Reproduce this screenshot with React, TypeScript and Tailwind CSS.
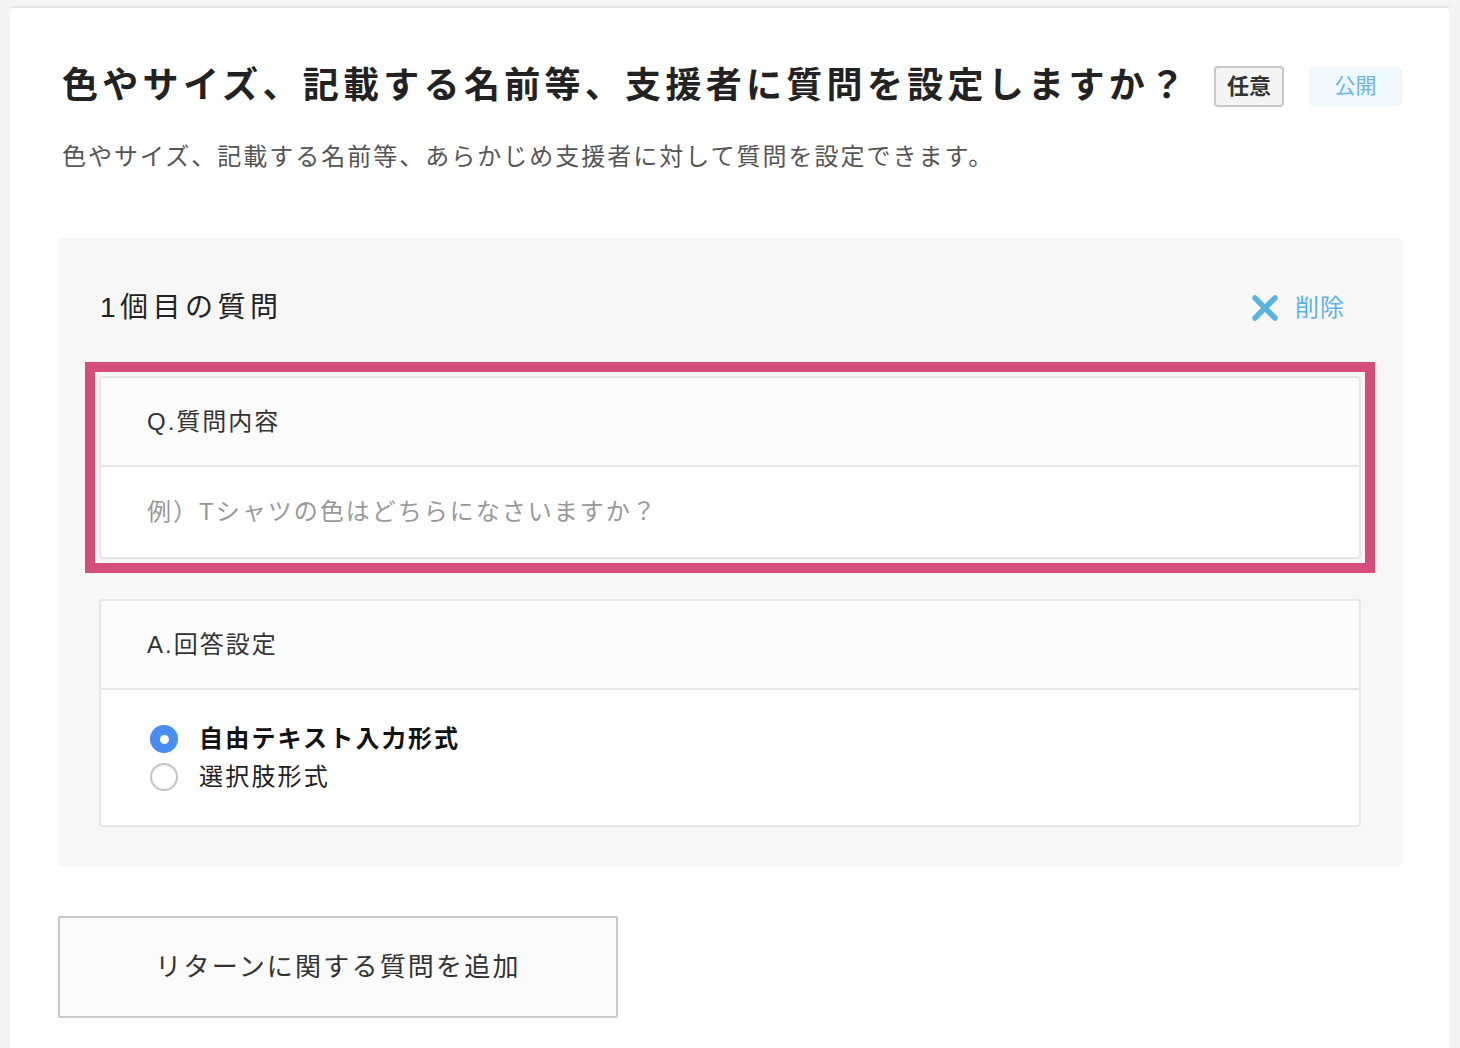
import React from 'react';

const jp = { fontFamily: '"Liberation Sans", "Noto Sans CJK JP", sans-serif' };

function Radio({ checked }: { checked: boolean }) {
  if (checked) {
    return (
      <span className="w-[28px] h-[28px] rounded-full bg-[#4a8df0] flex items-center justify-center shrink-0">
        <span className="w-[9px] h-[9px] rounded-full bg-white" />
      </span>
    );
  }
  return (
    <span className="w-[28px] h-[28px] rounded-full bg-white border-2 border-[#c4c4c4] shadow-[inset_0_1px_2px_rgba(0,0,0,0.08)] shrink-0" />
  );
}

function CloseIcon() {
  return (
    <svg width="28" height="28" viewBox="0 0 28 28" fill="none">
      <path d="M4 4 L24 24 M24 4 L4 24" stroke="#5bb3df" strokeWidth="5.5" strokeLinecap="round" />
    </svg>
  );
}

export default function App() {
  return (
    <div className="min-h-screen bg-[#f4f4f4] px-[10px] pt-[6px]" style={jp}>
      <div className="bg-white border-t-2 border-[#e2e2e2] rounded-t-[4px] px-[48px] pt-[53px] pb-[40px] min-h-[1100px]">
        {/* Header */}
        <div className="flex items-center">
          <h1 className="pl-[4px] text-[36px] leading-[50px] font-bold tracking-[4.3px] text-[#222]">
            色やサイズ、記載する名前等、支援者に質問を設定しますか？
          </h1>
          <div className="ml-auto flex items-center gap-[25px]">
            <span className="w-[70px] h-[41px] flex items-center justify-center bg-[#f4f4f4] border-2 border-[#c8c8c8] rounded-[4px] text-[22px] font-bold text-[#333]">
              任意
            </span>
            <span className="w-[93px] h-[39px] flex items-center justify-center bg-[#eff8fd] rounded-[4px] text-[21px] text-[#6db6df]">
              公開
            </span>
          </div>
        </div>
        <p className="pl-[4px] mt-[28px] text-[24px] leading-[36px] tracking-[2px] text-[#555]">
          色やサイズ、記載する名前等、あらかじめ支援者に対して質問を設定できます。
        </p>

        {/* Question panel */}
        <div className="mt-[63px] bg-[#f7f7f7] rounded-[4px] px-[41px] pt-[48px] pb-[40px]">
          <div className="flex items-center h-[44px] pr-[16px]">
            <h2 className="pl-[1px] text-[28px] tracking-[4.5px] text-[#222]">1個目の質問</h2>
            <button className="ml-auto flex items-center gap-[16px] text-[24px] tracking-[1px] text-[#5bb3df]">
              <CloseIcon />
              削除
            </button>
          </div>

          <div className="mt-[46px] outline-[10px] outline-solid outline-[#d64d7a] outline-offset-[4px]">
            <div className="border-2 border-[#e6e6e6] rounded-[4px] bg-white overflow-hidden">
              <div className="h-[87px] bg-[#fcfcfc] flex items-center px-[46px] text-[24px] tracking-[2px] text-[#333]">
                Q.質問内容
              </div>
              <div className="h-[92px] border-t-2 border-[#e6e6e6] flex items-center px-[46px] text-[24px] tracking-[2px] text-[#999]">
                例）Tシャツの色はどちらになさいますか？
              </div>
            </div>
          </div>

          <div className="mt-[40px] border-2 border-[#e6e6e6] rounded-[4px] bg-white overflow-hidden">
            <div className="h-[87px] bg-[#fcfcfc] flex items-center px-[46px] text-[24px] tracking-[2px] text-[#333]">
              A.回答設定
            </div>
            <div className="border-t-2 border-[#e6e6e6] px-[49px] pt-[30px] pb-[29px] flex flex-col">
              <label className="flex items-center gap-[21px] h-[38px]">
                <Radio checked />
                <span className="text-[24px] font-bold tracking-[2.2px] text-[#111]">自由テキスト入力形式</span>
              </label>
              <label className="flex items-center gap-[21px] h-[38px]">
                <Radio checked={false} />
                <span className="text-[24px] tracking-[2.2px] text-[#222]">選択肢形式</span>
              </label>
            </div>
          </div>
        </div>

        {/* Add button */}
        <button className="mt-[49px] w-[560px] h-[102px] bg-[#fbfbfb] border-2 border-[#c8c8c8] rounded-[2px] text-[26px] tracking-[2.2px] text-[#333]">
          リターンに関する質問を追加
        </button>
      </div>
    </div>
  );
}
